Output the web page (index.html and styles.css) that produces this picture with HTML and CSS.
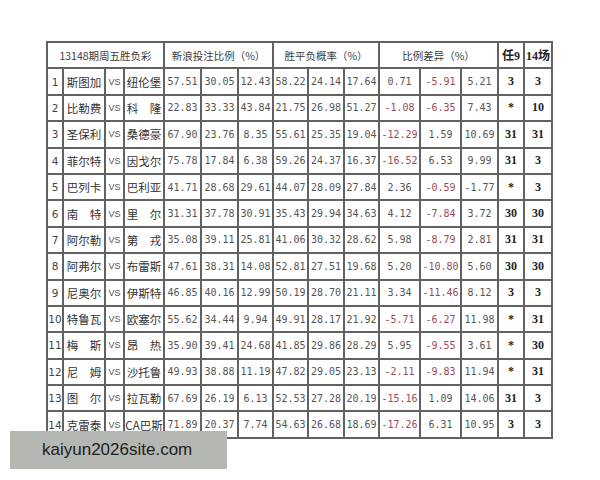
FILE: index.html
```html
<!DOCTYPE html>
<html lang="zh">
<head>
<meta charset="utf-8">
<link rel="stylesheet" href="styles.css">
</head>
<body>
<div class="sheet">
  <div class="tbl">
    <div class="c h span4">13148期周五胜负彩</div>
    <div class="c h span3">新浪投注比例（%）</div>
    <div class="c h span3">胜平负概率（%）</div>
    <div class="c h span3">比例差异（%）</div>
    <div class="c hb">任9</div>
    <div class="c hb">14场</div>

    <div class="c no">1</div><div class="c tm">斯图加</div><div class="c vs">VS</div><div class="c tm">纽伦堡</div>
    <div class="c n">57.51</div><div class="c n">30.05</div><div class="c n">12.43</div>
    <div class="c n">58.22</div><div class="c n">24.14</div><div class="c n">17.64</div>
    <div class="c n">0.71</div><div class="c n r">-5.91</div><div class="c n">5.21</div>
    <div class="c b">3</div><div class="c b">3</div>

    <div class="c no">2</div><div class="c tm">比勒费</div><div class="c vs">VS</div><div class="c tm">科　隆</div>
    <div class="c n">22.83</div><div class="c n">33.33</div><div class="c n">43.84</div>
    <div class="c n">21.75</div><div class="c n">26.98</div><div class="c n">51.27</div>
    <div class="c n r">-1.08</div><div class="c n r">-6.35</div><div class="c n">7.43</div>
    <div class="c b">*</div><div class="c b">10</div>

    <div class="c no">3</div><div class="c tm">圣保利</div><div class="c vs">VS</div><div class="c tm">桑德豪</div>
    <div class="c n">67.90</div><div class="c n">23.76</div><div class="c n">8.35</div>
    <div class="c n">55.61</div><div class="c n">25.35</div><div class="c n">19.04</div>
    <div class="c n r">-12.29</div><div class="c n">1.59</div><div class="c n">10.69</div>
    <div class="c b">31</div><div class="c b">31</div>

    <div class="c no">4</div><div class="c tm">菲尔特</div><div class="c vs">VS</div><div class="c tm">因戈尔</div>
    <div class="c n">75.78</div><div class="c n">17.84</div><div class="c n">6.38</div>
    <div class="c n">59.26</div><div class="c n">24.37</div><div class="c n">16.37</div>
    <div class="c n r">-16.52</div><div class="c n">6.53</div><div class="c n">9.99</div>
    <div class="c b">31</div><div class="c b">3</div>

    <div class="c no">5</div><div class="c tm">巴列卡</div><div class="c vs">VS</div><div class="c tm">巴利亚</div>
    <div class="c n">41.71</div><div class="c n">28.68</div><div class="c n">29.61</div>
    <div class="c n">44.07</div><div class="c n">28.09</div><div class="c n">27.84</div>
    <div class="c n">2.36</div><div class="c n r">-0.59</div><div class="c n">-1.77</div>
    <div class="c b">*</div><div class="c b">3</div>

    <div class="c no">6</div><div class="c tm">南　特</div><div class="c vs">VS</div><div class="c tm">里　尔</div>
    <div class="c n">31.31</div><div class="c n">37.78</div><div class="c n">30.91</div>
    <div class="c n">35.43</div><div class="c n">29.94</div><div class="c n">34.63</div>
    <div class="c n">4.12</div><div class="c n r">-7.84</div><div class="c n">3.72</div>
    <div class="c b">30</div><div class="c b">30</div>

    <div class="c no">7</div><div class="c tm">阿尔勒</div><div class="c vs">VS</div><div class="c tm">第　戎</div>
    <div class="c n">35.08</div><div class="c n">39.11</div><div class="c n">25.81</div>
    <div class="c n">41.06</div><div class="c n">30.32</div><div class="c n">28.62</div>
    <div class="c n">5.98</div><div class="c n r">-8.79</div><div class="c n">2.81</div>
    <div class="c b">31</div><div class="c b">31</div>

    <div class="c no">8</div><div class="c tm">阿弗尔</div><div class="c vs">VS</div><div class="c tm">布雷斯</div>
    <div class="c n">47.61</div><div class="c n">38.31</div><div class="c n">14.08</div>
    <div class="c n">52.81</div><div class="c n">27.51</div><div class="c n">19.68</div>
    <div class="c n">5.20</div><div class="c n r">-10.80</div><div class="c n">5.60</div>
    <div class="c b">30</div><div class="c b">30</div>

    <div class="c no">9</div><div class="c tm">尼奥尔</div><div class="c vs">VS</div><div class="c tm">伊斯特</div>
    <div class="c n">46.85</div><div class="c n">40.16</div><div class="c n">12.99</div>
    <div class="c n">50.19</div><div class="c n">28.70</div><div class="c n">21.11</div>
    <div class="c n">3.34</div><div class="c n r">-11.46</div><div class="c n">8.12</div>
    <div class="c b">3</div><div class="c b">3</div>

    <div class="c no">10</div><div class="c tm">特鲁瓦</div><div class="c vs">VS</div><div class="c tm">欧塞尔</div>
    <div class="c n">55.62</div><div class="c n">34.44</div><div class="c n">9.94</div>
    <div class="c n">49.91</div><div class="c n">28.17</div><div class="c n">21.92</div>
    <div class="c n r">-5.71</div><div class="c n r">-6.27</div><div class="c n">11.98</div>
    <div class="c b">*</div><div class="c b">31</div>

    <div class="c no">11</div><div class="c tm">梅　斯</div><div class="c vs">VS</div><div class="c tm">昂　热</div>
    <div class="c n">35.90</div><div class="c n">39.41</div><div class="c n">24.68</div>
    <div class="c n">41.85</div><div class="c n">29.86</div><div class="c n">28.29</div>
    <div class="c n">5.95</div><div class="c n r">-9.55</div><div class="c n">3.61</div>
    <div class="c b">*</div><div class="c b">30</div>

    <div class="c no">12</div><div class="c tm">尼　姆</div><div class="c vs">VS</div><div class="c tm">沙托鲁</div>
    <div class="c n">49.93</div><div class="c n">38.88</div><div class="c n">11.19</div>
    <div class="c n">47.82</div><div class="c n">29.05</div><div class="c n">23.13</div>
    <div class="c n r">-2.11</div><div class="c n r">-9.83</div><div class="c n">11.94</div>
    <div class="c b">*</div><div class="c b">31</div>

    <div class="c no">13</div><div class="c tm">图　尔</div><div class="c vs">VS</div><div class="c tm">拉瓦勒</div>
    <div class="c n">67.69</div><div class="c n">26.19</div><div class="c n">6.13</div>
    <div class="c n">52.53</div><div class="c n">27.28</div><div class="c n">20.19</div>
    <div class="c n r">-15.16</div><div class="c n">1.09</div><div class="c n">14.06</div>
    <div class="c b">31</div><div class="c b">3</div>

    <div class="c no">14</div><div class="c tm">克雷泰</div><div class="c vs">VS</div><div class="c tm">CA巴斯</div>
    <div class="c n">71.89</div><div class="c n">20.37</div><div class="c n">7.74</div>
    <div class="c n">54.63</div><div class="c n">26.68</div><div class="c n">18.69</div>
    <div class="c n r">-17.26</div><div class="c n">6.31</div><div class="c n">10.95</div>
    <div class="c b">3</div><div class="c b">3</div>
  </div>
  <div class="mark">kaiyun2026site.com</div>
</div>
</body>
</html>
```

FILE: styles.css
```css
html, body {
  margin: 0;
  padding: 0;
  background: #ffffff;
}
.sheet {
  position: relative;
  width: 600px;
  height: 480px;
  padding: 41px 0 0 46px;
  box-sizing: border-box;
}
.tbl {
  display: grid;
  grid-template-columns: 14px 40px 17px 38px 35px 35px 33px 33px 34px 33px 39px 39px 35px 24px 26px;
  grid-template-rows: repeat(15, 24.4px);
  gap: 2px;
  padding: 2px;
  width: max-content;
  background: #626262;
}
.c {
  background: #ffffff;
  display: flex;
  align-items: center;
  justify-content: center;
  white-space: nowrap;
  overflow: hidden;
}
.span4 { grid-column: span 4; }
.span3 { grid-column: span 3; }
.h {
  font-family: "Noto Sans CJK SC", sans-serif;
  font-size: 10.5px;
  color: #3c3c3c;
}
.hb {
  font-family: "Liberation Serif", "Noto Sans CJK SC", serif;
  font-weight: bold;
  font-size: 12px;
  color: #222;
}
.no {
  font-family: "DejaVu Sans", sans-serif;
  font-size: 10.5px;
  color: #444;
}
.tm {
  font-family: "Noto Sans CJK SC", sans-serif;
  font-size: 11.5px;
  color: #333;
}
.vs {
  font-family: "Liberation Sans", sans-serif;
  font-size: 9px;
  color: #555;
}
.n {
  font-family: "DejaVu Sans Mono", monospace;
  font-size: 10px;
  color: #555;
}
.r {
  color: #9a4a5c;
}
.b {
  font-family: "Liberation Serif", serif;
  font-weight: bold;
  font-size: 12px;
  color: #222;
}
.mark {
  position: absolute;
  left: 10px;
  top: 431px;
  width: 217px;
  height: 38px;
  box-sizing: border-box;
  padding-left: 32px;
  background: #b4b7b2;
  font-family: "Liberation Sans", sans-serif;
  font-size: 17px;
  color: #1e1e1e;
  display: flex;
  align-items: center;
}
```
